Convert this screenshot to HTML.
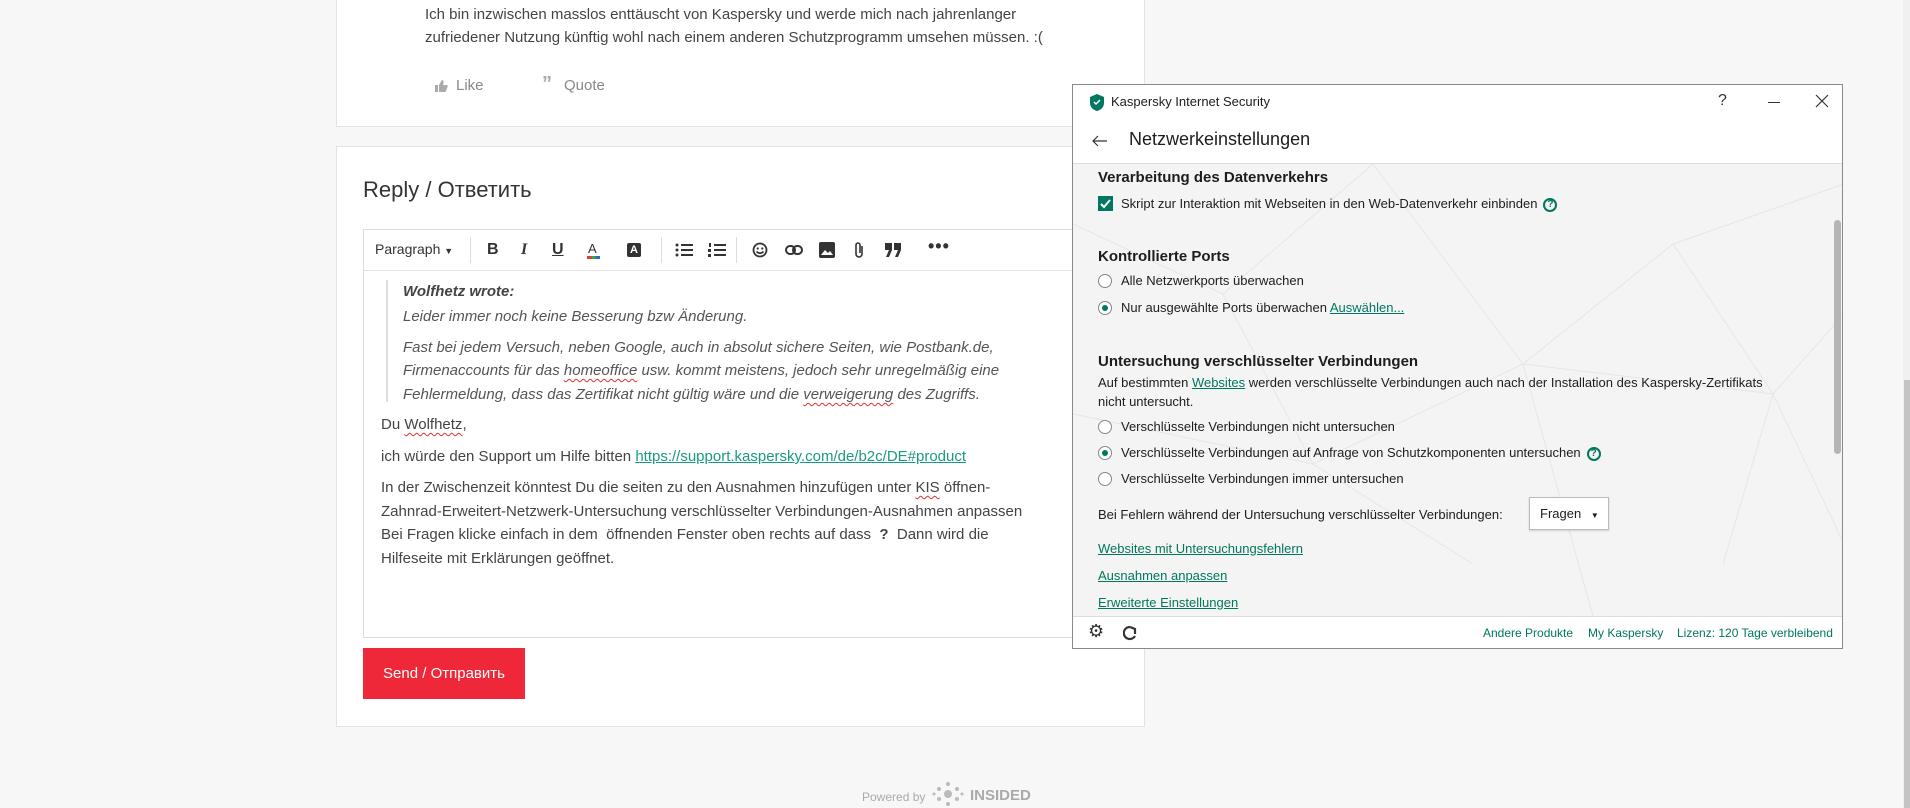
<!DOCTYPE html>
<html><head><meta charset="utf-8">
<style>
*{margin:0;padding:0;box-sizing:border-box}
body{width:1910px;height:808px;background:#f7f7f7;font-family:"Liberation Sans","Noto Sans CJK SC",sans-serif;position:relative;overflow:hidden;color:#333}
.a{position:absolute;white-space:nowrap}
.card{position:absolute;background:#fff;border:1px solid #e3e3e3}
.t{font-size:15px;color:#444}
.it{font-style:italic;color:#555}
.sq{text-decoration:underline wavy #d33;text-decoration-thickness:1px;text-underline-offset:3px}
.tb{position:absolute;top:241px;font-size:16px;color:#333;font-weight:bold}
.k{font-family:"Liberation Sans",sans-serif;font-size:13px;color:#1d1d1b}
.kh{font-size:15px;font-weight:bold;color:#1d1d1b}
.lnk{color:#00775e;text-decoration:underline}
.rad{position:absolute;width:14px;height:14px;border:1px solid #888;border-radius:50%;background:#fff}
.rad.on::after{content:"";position:absolute;left:3px;top:3px;width:6px;height:6px;border-radius:50%;background:#00775e}
.help{display:inline-block;width:14px;height:14px;border:2px solid #00775e;border-radius:50%;font-size:10px;font-weight:bold;color:#00775e;text-align:center;line-height:10px;vertical-align:middle;margin-left:6px}
.ft{position:absolute;top:541px;font-size:12px;color:#00775e;white-space:nowrap}
</style></head><body>

<div class="card" style="left:336px;top:-2px;width:809px;height:129px"></div>
<div class="a t" style="left:425px;top:6px">Ich bin inzwischen masslos enttäuscht von Kaspersky und werde mich nach jahrenlanger</div>
<div class="a t" style="left:425px;top:29px">zufriedener Nutzung künftig wohl nach einem anderen Schutzprogramm umsehen müssen. :(</div>
<svg class="a" style="left:434px;top:79px" width="14" height="14" viewBox="0 0 14 14"><path d="M1 6h3v7H1zM5 6l3-5c1 0 2 1 1.5 3L9 6h3.5c1 0 1.5 1 1 2l-2 5H5z" fill="#aaa"/></svg>
<div class="a t" style="left:456px;top:77px;color:#888">Like</div>
<div class="a" style="left:542px;top:73px;font-size:20px;color:#aaa;font-weight:bold">”</div>
<div class="a t" style="left:564px;top:77px;color:#888">Quote</div>

<div class="card" style="left:336px;top:146px;width:809px;height:581px"></div>
<div class="a" style="left:363px;top:177px;font-size:22px;color:#333">Reply / Ответить</div>
<div class="a" style="left:363px;top:229px;width:760px;height:409px;border:1px solid #ddd;background:#fff"></div>
<div class="a" style="left:364px;top:270px;width:758px;height:1px;background:#e3e3e3"></div>
<div class="a" style="left:375px;top:241px;font-size:14px;color:#333">Paragraph <span style="font-size:9px">▼</span></div>
<div class="a" style="left:470px;top:237px;width:1px;height:26px;background:#ddd"></div>
<div class="a" style="left:661px;top:237px;width:1px;height:26px;background:#ddd"></div>
<div class="a" style="left:736px;top:237px;width:1px;height:26px;background:#ddd"></div>
<div class="tb" style="left:487px">B</div>
<div class="tb" style="left:521px;font-style:italic;font-family:'Liberation Serif',serif">I</div>
<div class="tb" style="left:552px;text-decoration:underline">U</div>
<div class="a" style="left:588px;top:241px;font-size:13px">A</div>
<div class="a" style="left:587px;top:256px;width:13px;height:3px;background:linear-gradient(90deg,#e33 0 33%,#3a3 33% 66%,#36c 66%)"></div>
<div class="a" style="left:627px;top:243px;width:14px;height:14px;background:#333;color:#fff;font-size:11px;font-weight:bold;text-align:center;line-height:14px;border-radius:2px">A</div>
<svg class="a" style="left:675px;top:242px" width="18" height="16"><g fill="#333"><circle cx="2" cy="3" r="1.5"/><circle cx="2" cy="8" r="1.5"/><circle cx="2" cy="13" r="1.5"/><rect x="6" y="2" width="12" height="2"/><rect x="6" y="7" width="12" height="2"/><rect x="6" y="12" width="12" height="2"/></g></svg>
<svg class="a" style="left:708px;top:242px" width="18" height="16"><g fill="#333"><rect x="1" y="1" width="2" height="4"/><rect x="0" y="7" width="3" height="3"/><rect x="0" y="12" width="3" height="3"/><rect x="6" y="2" width="12" height="2"/><rect x="6" y="7" width="12" height="2"/><rect x="6" y="12" width="12" height="2"/></g></svg>
<svg class="a" style="left:752px;top:242px" width="16" height="16"><circle cx="8" cy="8" r="6.5" fill="none" stroke="#333" stroke-width="1.8"/><circle cx="5.7" cy="6.5" r="1.1" fill="#333"/><circle cx="10.3" cy="6.5" r="1.1" fill="#333"/><path d="M4.5 9.5q3.5 3.5 7 0" fill="none" stroke="#333" stroke-width="1.6"/></svg>
<svg class="a" style="left:785px;top:244px" width="18" height="12"><rect x="1" y="2" width="9" height="8" rx="4" fill="none" stroke="#333" stroke-width="2"/><rect x="8" y="2" width="9" height="8" rx="4" fill="none" stroke="#333" stroke-width="2"/></svg>
<svg class="a" style="left:819px;top:242px" width="16" height="16"><rect x="0" y="0" width="16" height="16" rx="2" fill="#333"/><path d="M2 13l4-5 3 3 2-2 3 4z" fill="#fff"/></svg>
<svg class="a" style="left:853px;top:241px" width="12" height="18"><path d="M9 5v8a3 3 0 0 1-6 0V4a2 2 0 0 1 4 0v8" fill="none" stroke="#333" stroke-width="1.6"/></svg>
<svg class="a" style="left:884px;top:242px" width="18" height="16"><path d="M1 1h7v7l-3 7H2l3-7H1zM10 1h7v7l-3 7h-3l3-7h-4z" fill="#333"/></svg>
<div class="a" style="left:928px;top:236px;font-size:18px;font-weight:bold;color:#333;letter-spacing:1px">•••</div>

<div class="a" style="left:386px;top:280px;width:2px;height:122px;background:#ddd"></div>
<div class="a t it" style="left:403px;top:283px;font-weight:bold;color:#444">Wolfhetz wrote:</div>
<div class="a t it" style="left:403px;top:308px">Leider immer noch keine Besserung bzw Änderung.</div>
<div class="a t it" style="left:403px;top:339px">Fast bei jedem Versuch, neben Google, auch in absolut sichere Seiten, wie Postbank.de,</div>
<div class="a t it" style="left:403px;top:362px">Firmenaccounts für das <span class="sq">homeoffice</span> usw. kommt meistens, jedoch sehr unregelmäßig eine</div>
<div class="a t it" style="left:403px;top:386px">Fehlermeldung, dass das Zertifikat nicht gültig wäre und die <span class="sq">verweigerung</span> des Zugriffs.</div>
<div class="a t" style="left:381px;top:416px">Du <span class="sq">Wolfhetz</span>,</div>
<div class="a t" style="left:381px;top:448px">ich würde den Support um Hilfe bitten <span style="color:#1a9a80;text-decoration:underline">https://support.kaspersky.com/de/b2c/DE#product</span></div>
<div class="a t" style="left:381px;top:479px">In der Zwischenzeit könntest Du die seiten zu den Ausnahmen hinzufügen unter <span class="sq">KIS</span> öffnen-</div>
<div class="a t" style="left:381px;top:503px">Zahnrad-Erweitert-Netzwerk-Untersuchung verschlüsselter Verbindungen-Ausnahmen anpassen</div>
<div class="a t" style="left:381px;top:526px">Bei Fragen klicke einfach in dem &nbsp;öffnenden Fenster oben rechts auf dass &nbsp;<b>?</b> &nbsp;Dann wird die</div>
<div class="a t" style="left:381px;top:550px">Hilfeseite mit Erklärungen geöffnet.</div>

<div class="a" style="left:363px;top:648px;width:162px;height:51px;background:#ee2839;color:#fff;font-size:15px;text-align:center;line-height:51px">Send / Отправить</div>

<div class="a" style="left:862px;top:790px;font-size:12px;color:#aaa">Powered by</div>
<svg class="a" style="left:932px;top:780px" width="32" height="28"><g fill="#bbb"><circle cx="16" cy="14" r="4"/><circle cx="16" cy="4" r="2"/><circle cx="16" cy="24" r="2"/><circle cx="7" cy="9" r="2"/><circle cx="25" cy="9" r="2"/><circle cx="7" cy="19" r="2"/><circle cx="25" cy="19" r="2"/><circle cx="2" cy="14" r="1.5"/><circle cx="30" cy="14" r="1.5"/></g></svg>
<div class="a" style="left:970px;top:787px;font-size:15px;font-weight:bold;color:#aaa">INSIDED</div>

<div class="a" style="left:1903px;top:0;width:7px;height:808px;background:#f0f0f0"></div>
<div class="a" style="left:1904px;top:380px;width:6px;height:428px;background:#c4c4c4"></div>

<div class="a" style="left:1072px;top:84px;width:771px;height:565px;border:1px solid #8a8a8a;background:#f4f4f4;overflow:hidden">
  <svg style="position:absolute;left:0;top:79px" width="771" height="452"><g stroke="#e6e6e6" stroke-width="1" fill="none">
    <path d="M0 60L150 130 300 0M150 130L240 300 400 400M300 0L450 200 600 80 771 20M450 200L700 230 771 150M240 300L450 200M600 80L700 230 650 400M0 250L240 300M450 200L520 452M700 230L771 380"/></g></svg>
  <div style="position:absolute;left:0;top:0;width:771px;height:79px;background:#fff;border-bottom:1px solid #ddd"></div>
  <svg style="position:absolute;left:17px;top:9px" width="14" height="17"><path d="M7 0L14 3v6c0 4-3 7-7 8-4-1-7-4-7-8V3z" fill="#00775e"/><path d="M4 8l2 2 4-4" stroke="#fff" stroke-width="1.5" fill="none"/></svg>
  <div class="a k" style="left:38px;top:9px">Kaspersky Internet Security</div>
  <div class="a" style="left:645px;top:7px;font-size:16px;color:#333">?</div>
  <div class="a" style="left:695px;top:17px;width:12px;height:1px;background:#333"></div>
  <svg style="position:absolute;left:742px;top:9px" width="14" height="14"><path d="M1 1l12 12M13 1L1 13" stroke="#333" stroke-width="1.2"/></svg>
  <svg style="position:absolute;left:19px;top:50px" width="16" height="12"><path d="M15 6H1M6 1L1 6l5 5" stroke="#333" stroke-width="1.2" fill="none"/></svg>
  <div class="a" style="left:56px;top:44px;font-size:18px;color:#1d1d1b">Netzwerkeinstellungen</div>

  <div class="a kh" style="left:25px;top:84px">Verarbeitung des Datenverkehrs</div>
  <div class="a" style="left:25px;top:111px;width:15px;height:15px;background:#00775e"><svg width="15" height="15"><path d="M3 8l3 3 6-7" stroke="#fff" stroke-width="2" fill="none"/></svg></div>
  <div class="a k" style="left:48px;top:111px">Skript zur Interaktion mit Webseiten in den Web-Datenverkehr einbinden<span class="help">?</span></div>

  <div class="a kh" style="left:25px;top:163px">Kontrollierte Ports</div>
  <div class="rad" style="left:25px;top:189px"></div>
  <div class="a k" style="left:48px;top:188px">Alle Netzwerkports überwachen</div>
  <div class="rad on" style="left:25px;top:216px"></div>
  <div class="a k" style="left:48px;top:215px">Nur ausgewählte Ports überwachen <span class="lnk">Auswählen...</span></div>

  <div class="a kh" style="left:25px;top:268px">Untersuchung verschlüsselter Verbindungen</div>
  <div class="a k" style="left:25px;top:290px">Auf bestimmten <span class="lnk">Websites</span> werden verschlüsselte Verbindungen auch nach der Installation des Kaspersky-Zertifikats</div>
  <div class="a k" style="left:25px;top:309px">nicht untersucht.</div>
  <div class="rad" style="left:25px;top:335px"></div>
  <div class="a k" style="left:48px;top:334px">Verschlüsselte Verbindungen nicht untersuchen</div>
  <div class="rad on" style="left:25px;top:361px"></div>
  <div class="a k" style="left:48px;top:360px">Verschlüsselte Verbindungen auf Anfrage von Schutzkomponenten untersuchen<span class="help">?</span></div>
  <div class="rad" style="left:25px;top:387px"></div>
  <div class="a k" style="left:48px;top:386px">Verschlüsselte Verbindungen immer untersuchen</div>
  <div class="a k" style="left:25px;top:422px">Bei Fehlern während der Untersuchung verschlüsselter Verbindungen:</div>
  <div class="a k" style="left:456px;top:412px;width:80px;height:33px;background:#fff;border:1px solid #bbb;padding:8px 0 0 10px;box-shadow:0 1px 2px rgba(0,0,0,.15)">Fragen <span style="font-size:8px;margin-left:6px">▼</span></div>
  <div class="a k lnk" style="left:25px;top:456px">Websites mit Untersuchungsfehlern</div>
  <div class="a k lnk" style="left:25px;top:483px">Ausnahmen anpassen</div>
  <div class="a k lnk" style="left:25px;top:510px">Erweiterte Einstellungen</div>
  <div class="a" style="left:761px;top:135px;width:7px;height:234px;border-radius:4px;background:#b5b5b5"></div>

  <div style="position:absolute;left:0;top:531px;width:771px;height:34px;background:#fff;border-top:1px solid #ddd"></div>
  <div class="a" style="left:15px;top:536px;font-size:18px;color:#333">⚙</div>
  <svg style="position:absolute;left:50px;top:541px" width="14" height="16"><path d="M7 1a6 6 0 1 0 5 9M7 1l5 2v5" stroke="#333" stroke-width="2.2" fill="none"/></svg>
  <div class="ft" style="left:410px">Andere Produkte</div>
  <div class="ft" style="left:515px">My Kaspersky</div>
  <div class="ft" style="left:604px">Lizenz: 120 Tage verbleibend</div>
</div>
</body></html>
